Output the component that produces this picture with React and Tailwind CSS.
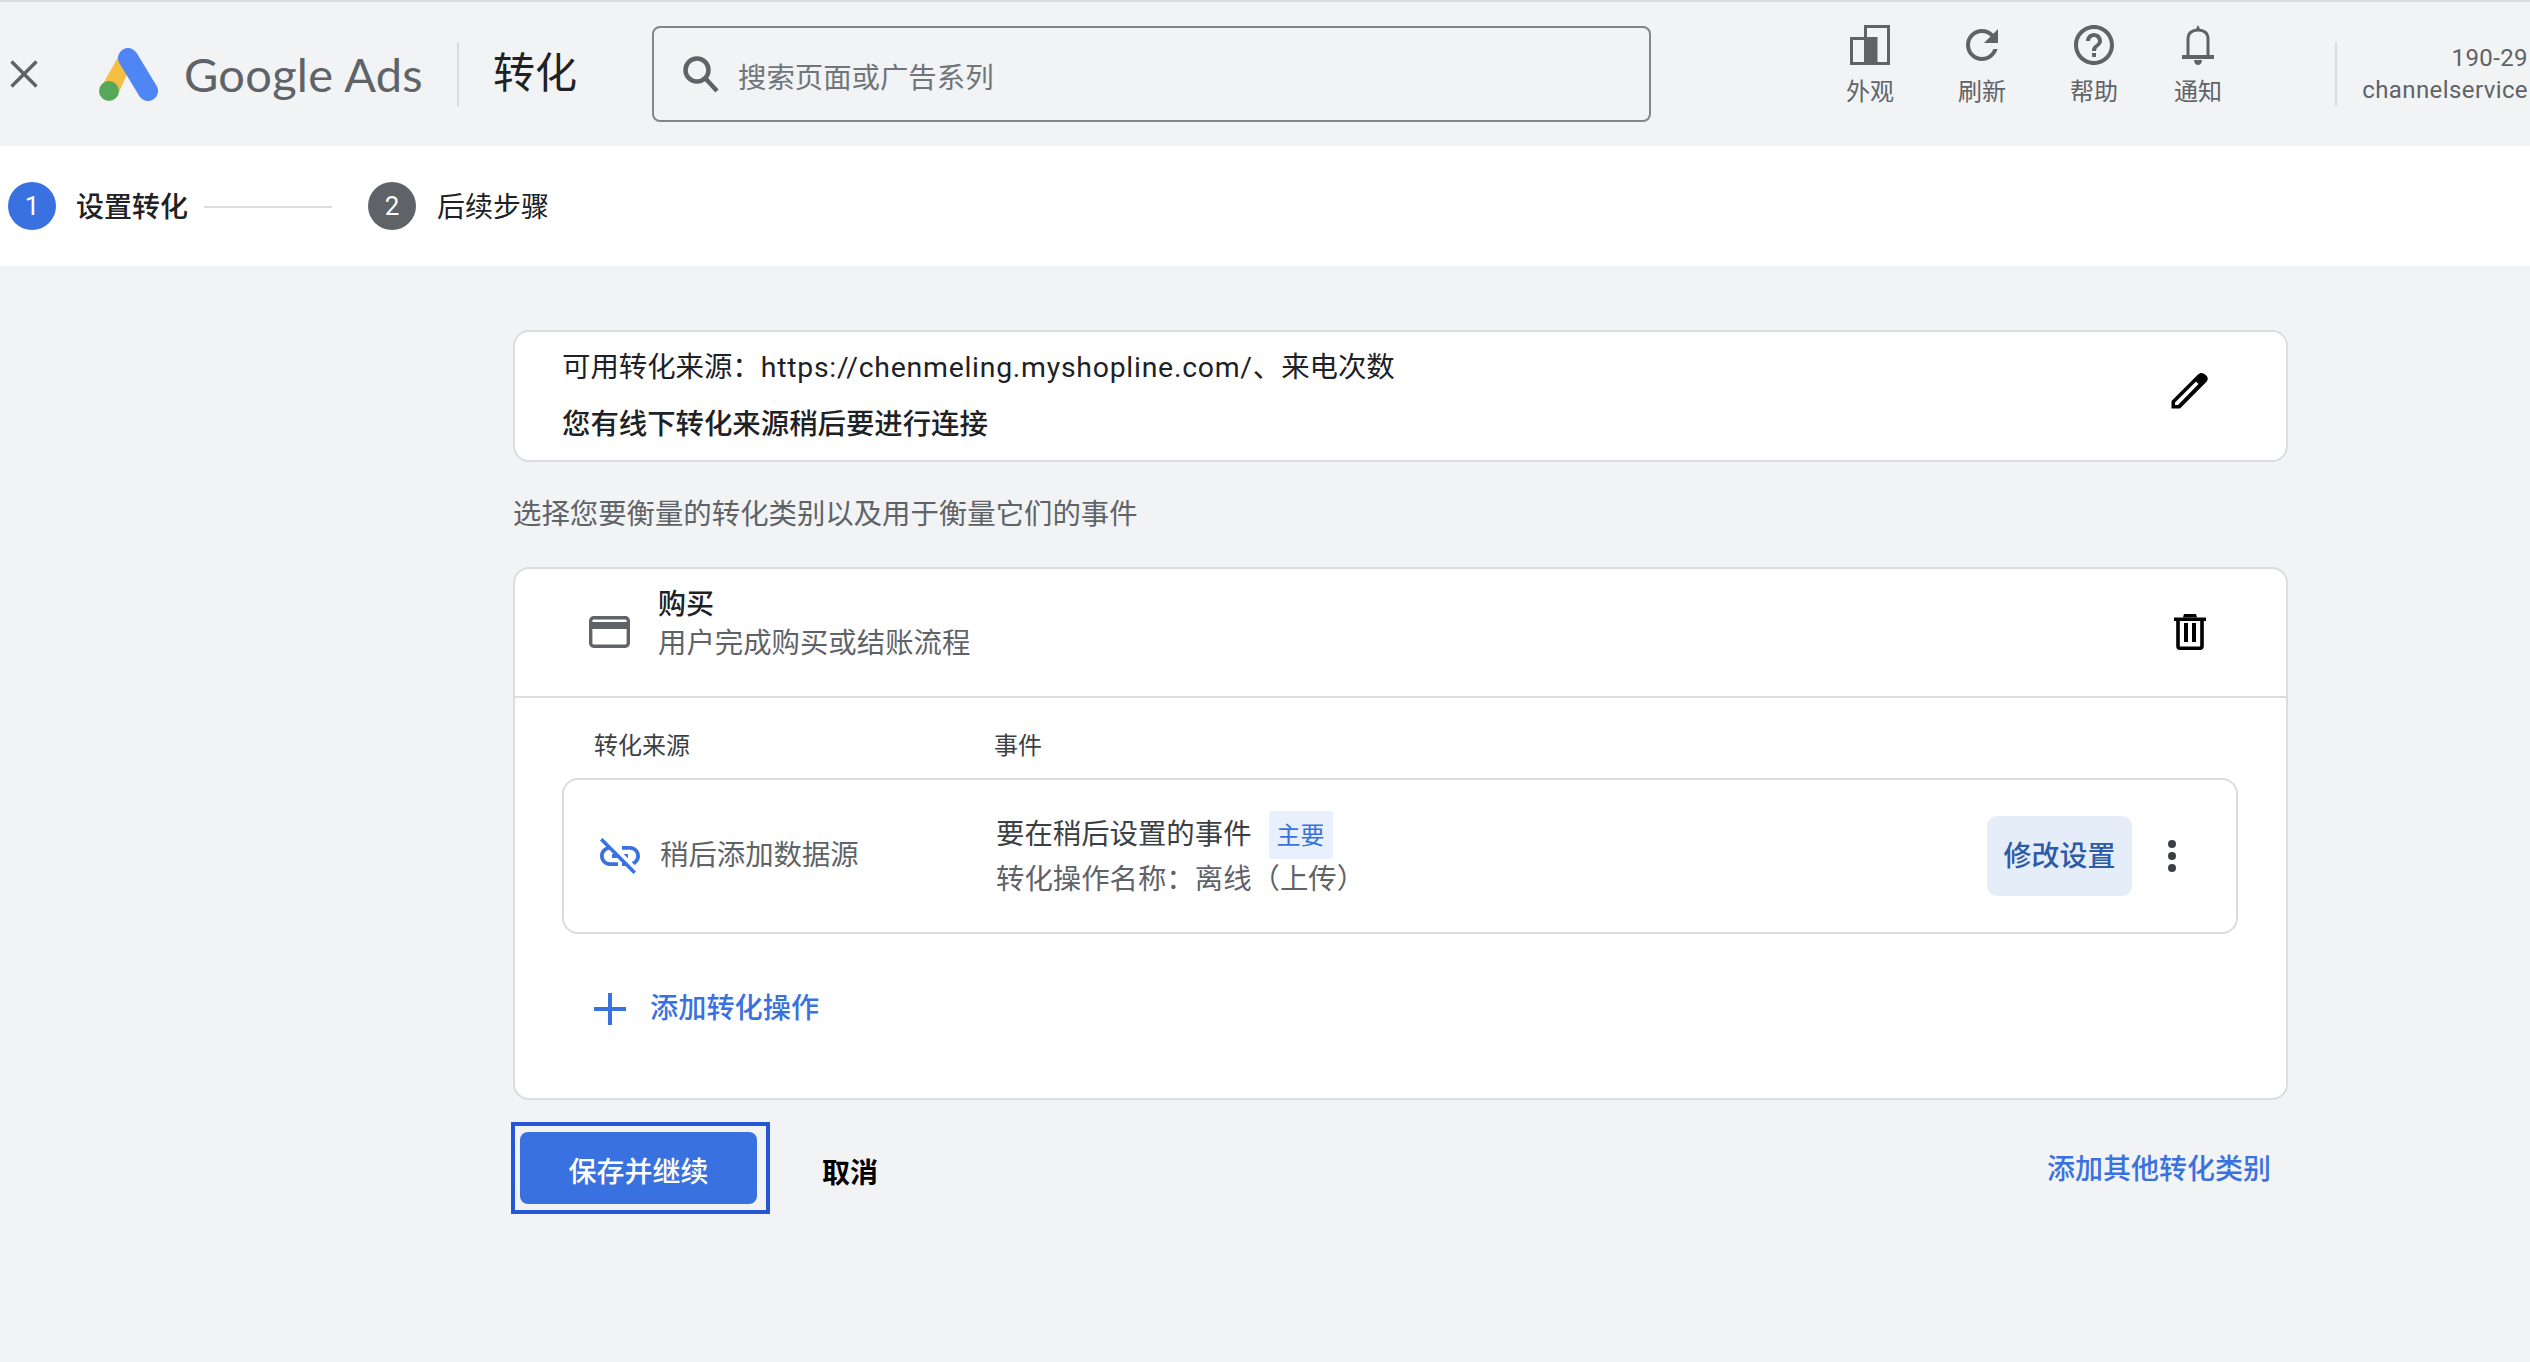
import React from "react";

const F = "[font-family:Roboto,'Noto_Sans_CJK_SC',sans-serif]";

function TopAction({ label, children }) {
  return (
    <div className="flex w-[64px] flex-col items-center">
      <div className="flex h-[48px] w-[64px] items-center justify-center">{children}</div>
      <div className="mt-[7px] text-[24px] leading-[32px] text-[#5f6368]">{label}</div>
    </div>
  );
}

export default function App() {
  return (
    <div className={`min-h-[1362px] w-full overflow-hidden bg-[#f1f3f4] ${F}`}>
      {/* Header */}
      <header className="flex h-[146px] items-center border-t-2 border-[#dadce0] bg-[#f1f3f4]">
        <svg className="ml-[10px] shrink-0" width="28" height="28" viewBox="0 0 28 28" fill="none" stroke="#5f6368" strokeWidth="3.4">
          <path d="M1.5 1.5 26.5 26.5M26.5 1.5 1.5 26.5" />
        </svg>
        <svg className="ml-[61px] shrink-0" width="59" height="53" viewBox="0 0 59 53">
          <path d="M19 9 L0 43 L20 44 L30 22 Z" fill="#f4bf42" />
          <path d="M29 10 L49 43" stroke="#5086f3" strokeWidth="20" strokeLinecap="round" />
          <circle cx="10" cy="43" r="10" fill="#57a75b" />
        </svg>
        <div className="ml-[26px] w-[240px] shrink-0 text-[47px] leading-[56px] tracking-[0.3px] text-[#5f6368] [font-family:Lato,sans-serif]">
          Google Ads
        </div>
        <div className="ml-[33px] h-[64px] w-[2px] shrink-0 bg-[#dadce0]" />
        <div className="ml-[34px] w-[85px] shrink-0 text-[42px] leading-[56px] text-[#202124]">转化</div>
        <div className="ml-[74px] flex h-[96px] w-[999px] shrink-0 items-center rounded-[8px] border-2 border-[#80868b] pl-[26px]">
          <svg width="40" height="40" viewBox="0 0 40 40" fill="none" stroke="#5f6368" strokeWidth="4.5">
            <circle cx="17" cy="16" r="11.5" />
            <path d="M25.5 24.5 37 37" />
          </svg>
          <span className="ml-[18px] pt-[9px] text-[28.4px] leading-[40px] text-[#70757a]">搜索页面或广告系列</span>
        </div>
        <div className="ml-[187px] flex shrink-0 self-start pt-[19px]">
          <TopAction label="外观">
            <svg width="40" height="40" viewBox="0 0 40 40" fill="none">
              <path d="M15.5 1.5H38.5V38.5H15.5Z" stroke="#5f6368" strokeWidth="3" />
              <path d="M1.5 13.5H26V38.5H1.5Z" stroke="#5f6368" strokeWidth="3" />
              <rect x="15" y="12" width="12" height="28" fill="#5f6368" />
            </svg>
          </TopAction>
          <div className="ml-[48px]">
            <TopAction label="刷新">
              <svg width="48" height="48" viewBox="0 0 24 24" fill="#5f6368">
                <path d="M17.65 6.35C16.2 4.9 14.21 4 12 4c-4.42 0-7.99 3.58-7.99 8s3.57 8 7.99 8c3.73 0 6.84-2.55 7.73-6h-2.08c-.82 2.33-3.04 4-5.65 4-3.31 0-6-2.69-6-6s2.69-6 6-6c1.66 0 3.14.69 4.22 1.78L13 11h7V4l-2.35 2.35z" />
              </svg>
            </TopAction>
          </div>
          <div className="ml-[48px]">
            <TopAction label="帮助">
              <svg width="48" height="48" viewBox="0 0 24 24" fill="#5f6368">
                <path d="M11 18h2v-2h-2v2zm1-16C6.48 2 2 6.48 2 12s4.48 10 10 10 10-4.48 10-10S17.52 2 12 2zm0 18c-4.41 0-8-3.59-8-8s3.59-8 8-8 8 3.59 8 8-3.59 8-8 8zm0-14c-2.21 0-4 1.79-4 4h2c0-1.1.9-2 2-2s2 .9 2 2c0 2-3 1.75-3 5h2c0-2.25 3-2.5 3-5 0-2.21-1.79-4-4-4z" />
              </svg>
            </TopAction>
          </div>
          <div className="ml-[40px]">
            <TopAction label="通知">
              <svg width="32" height="40" viewBox="0 0 32 40" fill="none">
                <path d="M6 31V14C6 8 10 5 16 5s10 3 10 9v17" stroke="#5f6368" strokeWidth="3" />
                <rect x="0" y="30" width="32" height="4" fill="#5f6368" />
                <path d="M13 6 16 0 19 6Z" fill="#5f6368" />
                <path d="M12 35h8c0 3-2 5-4 5s-4-2-4-5Z" fill="#5f6368" />
              </svg>
            </TopAction>
          </div>
        </div>
        <div className="ml-[105px] h-[64px] w-[2px] shrink-0 bg-[#dadce0]" />
        <div className="ml-[23px] w-[168px] shrink-0 self-start pt-[40px] text-right text-[24px] leading-[32px] tracking-[0.4px] whitespace-nowrap text-[#5f6368]">
          <div>190-29</div>
          <div>channelservice</div>
        </div>
      </header>

      {/* Stepper */}
      <div className="flex h-[120px] items-center bg-white pl-[8px]">
        <div className="flex h-[48px] w-[48px] items-center justify-center rounded-full bg-[#3a71e0] text-[26px] text-white">1</div>
        <span className="ml-[20px] pt-[3px] text-[28px] font-medium text-[#202124]">设置转化</span>
        <div className="ml-[16px] mt-[2px] h-[2px] w-[128px] bg-[#dadce0]" />
        <div className="ml-[36px] flex h-[48px] w-[48px] items-center justify-center rounded-full bg-[#5f6368] text-[26px] text-white">2</div>
        <span className="ml-[21px] pt-[3px] text-[28px] text-[#202124]">后续步骤</span>
      </div>

      {/* Main */}
      <main className="ml-[513px] w-[1775px] pt-[64px]">
        <section className="flex h-[132px] items-center justify-between rounded-[16px] border-2 border-[#dadce0] bg-white pr-[78px] pl-[47px]">
          <div>
            <div className="text-[28.4px] leading-[57px] text-[#202124]">
              可用转化来源：<span className="tracking-[0.75px]">https://chenmeling.myshopline.com/</span>、来电次数
            </div>
            <div className="text-[28.4px] leading-[57px] font-medium text-[#202124]">您有线下转化来源稍后要进行连接</div>
          </div>
          <svg className="mb-[12px]" width="37" height="37" viewBox="0 0 37 37" fill="#000">
            <path
              fillRule="evenodd"
              d="M0.5 36.5V29L27 2.5C29 0.5 31 0.5 33 1.7L35.5 3.7C37.2 5.5 37.2 7.8 35.5 9.7L9 36.5ZM4 33H7L27.5 12 25 9.5 4 30.5Z"
            />
          </svg>
        </section>

        <p className="mt-[31px] mb-[34px] h-[40px] pt-[2px] text-[28.4px] leading-[40px] text-[#5f6368]">选择您要衡量的转化类别以及用于衡量它们的事件</p>

        <section className="h-[533px] rounded-[16px] border-2 border-[#dadce0] bg-white">
          <div className="flex h-[129px] items-center justify-between border-b-2 border-[#dadce0] pr-[80px] pl-[74px]">
            <div className="flex items-center">
              <svg className="mb-[2px]" width="41" height="32" viewBox="0 0 41 32" fill="none">
                <rect x="1.7" y="1.7" width="37.6" height="28.6" rx="3" stroke="#5f6368" strokeWidth="3.4" />
                <rect x="2" y="6" width="37" height="7" fill="#5f6368" />
              </svg>
              <div className="ml-[28px] pb-[18px]">
                <div className="text-[28px] leading-[39px] font-medium text-[#202124]">购买</div>
                <div className="text-[28.4px] leading-[39px] text-[#5f6368]">用户完成购买或结账流程</div>
              </div>
            </div>
            <svg className="mb-[2px]" width="32" height="36" viewBox="0 0 32 36" fill="none">
              <path d="M0 3.5H32V7H0Z" fill="#000" />
              <path d="M9 3.5 10 0H22L23 3.5Z" fill="#000" />
              <path d="M4 6V32C4 33.5 4.8 34.2 6 34.2H26C27.2 34.2 28 33.5 28 32V6" stroke="#000" strokeWidth="3.6" />
              <rect x="10" y="9" width="4" height="19" fill="#000" />
              <rect x="18" y="9" width="4" height="19" fill="#000" />
            </svg>
          </div>

          <div className="flex h-[80px] items-center pt-[16px] pl-[79px] text-[24px] text-[#3c4043]">
            <div className="w-[400px]">转化来源</div>
            <div>事件</div>
          </div>

          <div className="mr-[48px] ml-[47px] flex h-[156px] items-center rounded-[16px] border-2 border-[#dadce0]">
            <div className="flex w-[432px] shrink-0 items-center pl-[32px]">
              <svg width="48" height="48" viewBox="0 0 24 24" fill="#3a71e0">
                <path d="M17 7h-4v1.9h4c1.71 0 3.1 1.39 3.1 3.1 0 1.43-.97 2.63-2.29 2.98l1.46 1.46C20.88 15.61 22 13.95 22 12c0-2.76-2.24-5-5-5zm-1 4h-2.19l2 2H16zM2 4.27l3.11 3.11C3.29 8.12 2 9.91 2 12c0 2.76 2.24 5 5 5h4v-1.9H7c-1.71 0-3.1-1.39-3.1-3.1 0-1.59 1.21-2.9 2.76-3.07L8.73 11H8v2h2.73L13 15.27V17h1.73l4.01 4L20 19.74 3.27 3 2 4.27z" />
              </svg>
              <span className="ml-[16px] pt-[1px] text-[28.4px] text-[#5f6368]">稍后添加数据源</span>
            </div>
            <div className="flex-1 pt-[3px]">
              <div className="flex h-[44px] items-center text-[28.4px] text-[#3c4043]">
                要在稍后设置的事件
                <span className="ml-[17px] flex h-[48px] items-center rounded-[3px] bg-[#e8f0fe] px-[8px] pt-[2px] text-[24px] text-[#3a71e0]">主要</span>
              </div>
              <div className="h-[45px] pt-[1px] text-[28.4px] leading-[44px] text-[#5f6368]">转化操作名称：离线（上传）</div>
            </div>
            <button className="flex h-[80px] w-[145px] items-center justify-center rounded-[10px] bg-[#e5edf9] pt-[2px] text-[28px] font-medium text-[#2e5aa8]">
              修改设置
            </button>
            <div className="mr-[40px] ml-[16px] flex h-[48px] w-[48px] flex-col items-center justify-center gap-[4px]">
              <span className="h-[8px] w-[8px] rounded-full bg-[#3c4043]" />
              <span className="h-[8px] w-[8px] rounded-full bg-[#3c4043]" />
              <span className="h-[8px] w-[8px] rounded-full bg-[#3c4043]" />
            </div>
          </div>

          <div className="mt-[51px] flex h-[48px] items-center pl-[79px]">
            <svg width="32" height="32" viewBox="0 0 32 32" fill="#3a71e0">
              <path d="M14 0h4v14h14v4H18v14h-4V18H0v-4h14z" />
            </svg>
            <span className="ml-[24px] text-[28.2px] font-medium text-[#3a71e0]">添加转化操作</span>
          </div>
        </section>

        <div className="mt-[22px] -ml-[2px] flex h-[92px] items-center">
          <div className="h-[92px] w-[259px] border-4 border-[#2557d6] pt-[6px] pl-[5px]">
            <button className="h-[72px] w-[237px] rounded-[8px] bg-[#3a71e0] pt-[10px] text-[28px] font-medium text-white">保存并继续</button>
          </div>
          <span className="ml-[52px] pt-[11px] text-[28px] font-bold text-black">取消</span>
          <span className="mr-[17px] ml-auto pt-[3px] text-[28px] font-medium text-[#3a71e0]">添加其他转化类别</span>
        </div>
      </main>
    </div>
  );
}
